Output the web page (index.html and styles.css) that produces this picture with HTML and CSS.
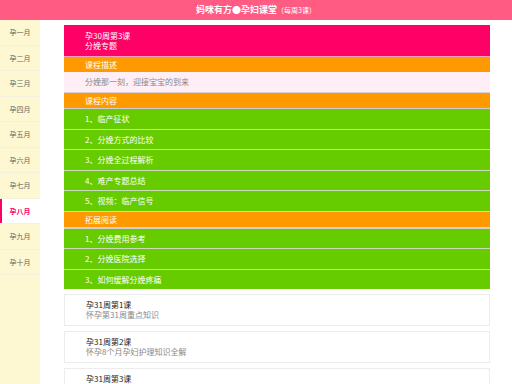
FILE: index.html
```html
<!DOCTYPE html>
<html lang="zh-CN">
<head>
    <meta charset="UTF-8">
    <meta name="viewport" content="width=device-width, initial-scale=1.0">
    <title>妈咪有方 | 孕妇课堂</title>
    <link rel="stylesheet" href="styles.css">
</head>
<body>
    <header class="topbar">妈咪有方●孕妇课堂<small>（每周3课）</small></header>

    <div class="layout">
        <nav class="months">
            <a href="#">孕一月</a>
            <a href="#">孕二月</a>
            <a href="#">孕三月</a>
            <a href="#">孕四月</a>
            <a href="#">孕五月</a>
            <a href="#">孕六月</a>
            <a href="#">孕七月</a>
            <a href="#" class="active">孕八月</a>
            <a href="#">孕九月</a>
            <a href="#">孕十月</a>
        </nav>

        <main class="content">
            <section class="lesson">
                <div class="lesson-head">孕30周第3课<br>分娩专题</div>
                <div class="bar">课程描述</div>
                <div class="desc">分娩那一刻，迎接宝宝的到来</div>
                <div class="bar">课程内容</div>
                <ul class="topics">
                    <li>1、临产征状</li>
                    <li>2、分娩方式的比较</li>
                    <li>3、分娩全过程解析</li>
                    <li>4、难产专题总结</li>
                    <li>5、视频：临产信号</li>
                </ul>
                <div class="bar">拓展阅读</div>
                <ul class="topics">
                    <li>1、分娩费用参考</li>
                    <li>2、分娩医院选择</li>
                    <li>3、如何缓解分娩疼痛</li>
                </ul>
            </section>

            <a href="#" class="card">
                <span class="card-title">孕31周第1课</span>
                <span class="card-sub">怀孕第31周重点知识</span>
            </a>
            <a href="#" class="card">
                <span class="card-title">孕31周第2课</span>
                <span class="card-sub">怀孕8个月孕妇护理知识全解</span>
            </a>
            <a href="#" class="card">
                <span class="card-title">孕31周第3课</span>
                <span class="card-sub">关于怀孕第八个月说明</span>
            </a>
        </main>
    </div>
</body>
</html>
```

FILE: styles.css
```css
body {
    margin: 0;
    background: #fff;
    font-family: "Noto Sans CJK SC", "Liberation Sans", sans-serif;
    font-size: 8px;
    color: #333;
}

a {
    text-decoration: none;
}

.topbar {
    height: 20px;
    line-height: 20px;
    background: #ff5b83;
    color: #fff;
    text-align: center;
    font-size: 9px;
    font-weight: bold;
}

.topbar small {
    font-size: 7px;
    font-weight: normal;
}

.layout {
    display: flex;
    min-height: 364px;
}

.months {
    width: 40px;
    flex-shrink: 0;
    background: #fdf8d1;
    display: flex;
    flex-direction: column;
}

.months a {
    height: 24.5px;
    line-height: 24.5px;
    border-bottom: 1px solid #f6f1df;
    text-align: center;
    font-size: 7px;
    color: #666;
}

.months a.active {
    background: #fff;
    color: #ff0066;
    font-weight: bold;
    box-shadow: inset 2px 0 0 #ff0066;
}

.content {
    flex: 1;
    padding: 5px 22px 0 24px;
    display: flex;
    flex-direction: column;
    gap: 5px;
}

.lesson {
    display: flex;
    flex-direction: column;
}

.lesson-head {
    background: #ff0066;
    color: #fff;
    padding: 6px 21px 5px;
    line-height: 10px;
    border-bottom: 1px solid #ff9fc2;
}

.bar {
    height: 15px;
    line-height: 15px;
    background: #ff9900;
    color: #fff;
    padding: 0 21px;
}

.desc {
    height: 20px;
    line-height: 20px;
    background: #ffeef6;
    color: #888;
    padding: 0 21px;
    border-bottom: 1px solid #d9d0d4;
}

.topics {
    list-style: none;
    margin: 0;
    padding: 0;
}

.topics li {
    height: 19.5px;
    line-height: 19.5px;
    background: #66cc00;
    color: #fff;
    padding: 0 21px;
    border-top: 1px solid #c9dcb8;
}

.topics li:first-child {
    border-top-color: #cfcfcf;
}

.topics + .bar {
    border-top: 1px solid #ffd08a;
    border-bottom: 1px solid #ffd08a;
}

.card {
    display: flex;
    flex-direction: column;
    justify-content: center;
    height: 30px;
    padding: 0 21px;
    border: 1px solid #ececec;
    background: #fff;
    line-height: 10px;
}

.card-title {
    color: #222;
}

.card-sub {
    color: #888;
}
```
